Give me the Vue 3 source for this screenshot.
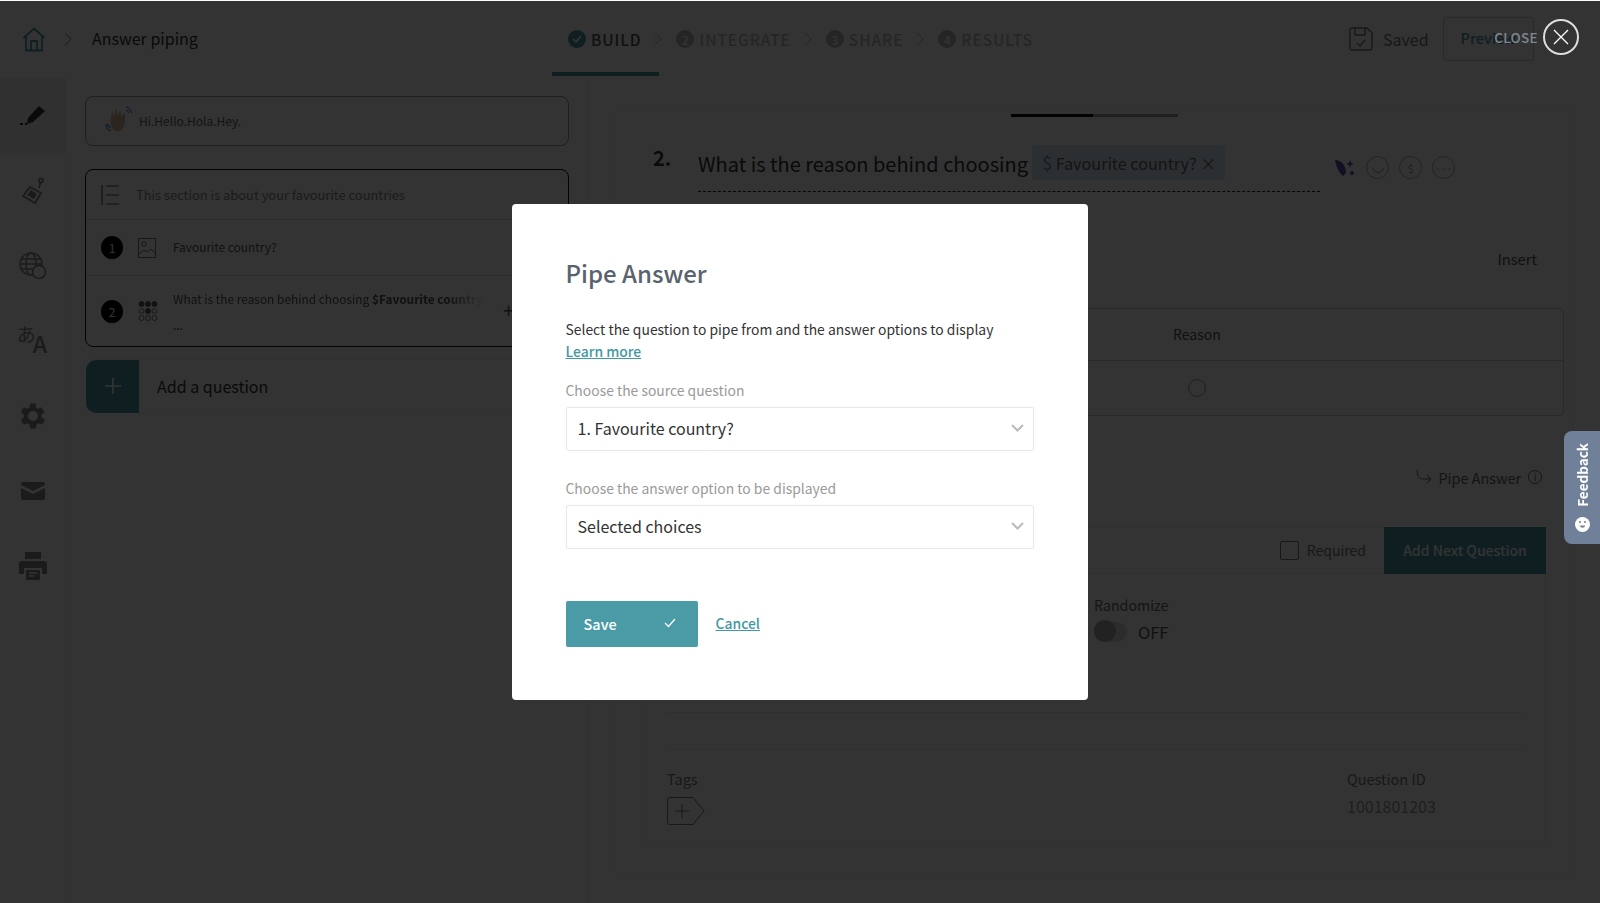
<template>
  <div class="page">
    <header class="topbar">
      <div class="crumbs">
        <svg class="home" width="24" height="25" viewBox="0 0 24 25" fill="none" stroke="#4a9ba5" stroke-width="1.8"><path d="M1.500 11 12 1.500 22.500 11M4 9v14.500h16V9M9 23.500V14h6v9.500" /></svg>
        <svg class="chev" width="8" height="14" viewBox="0 0 8 14" fill="none" stroke="#888" stroke-width="1"><path d="M1 1l6 6-6 6" /></svg>
        <span class="crumb-title">Answer piping</span>
      </div>
      <nav class="steps">
        <div class="tab-line"></div>
        <template v-for="(s, i) in steps" :key="s">
          <div class="step" :class="{ active: i === 0 }">
            <span class="step-dot">
              <svg v-if="i === 0" width="10" height="8" viewBox="0 0 10 8" fill="none" stroke="#fff" stroke-width="1.600"><path d="M1 4l3 3 5-6" /></svg>
              <template v-else>{{ i + 1 }}</template>
            </span>
            <span>{{ s }}</span>
          </div>
          <svg v-if="i < 3" class="step-chev" width="8" height="14" viewBox="0 0 8 14" fill="none" stroke="#bbb" stroke-width="1"><path d="M1 1l6 6-6 6" /></svg>
        </template>
      </nav>
      <div class="top-actions">
        <svg width="24" height="24" viewBox="0 0 24 24" fill="none" stroke="#777" stroke-width="1.400"><path d="M1 3a2 2 0 0 1 2-2h15l5 5v15a2 2 0 0 1-2 2H3a2 2 0 0 1-2-2zM6 1v7h10V1M8 16l3 3 5-6" /></svg>
        <span class="saved">Saved</span>
        <div class="preview-btn">Preview</div>
      </div>
    </header>

    <div class="main">
      <aside class="sidebar">
        <div class="side-item on">
          <svg width="26" height="20" viewBox="0 0 26 20" fill="#333"><path d="M19 0l6 5-12 11-6 2 1-6zM0 17h3v2H0zM5 17h2v2H5z" /></svg>
        </div>
        <div class="side-item">
          <svg width="24" height="28" viewBox="0 0 24 28" fill="none" stroke="#888" stroke-width="1.800"><circle cx="20" cy="3.500" r="2" /><path d="M19.500 5.500 18 11" /><path d="M9 10l11 6-6 10-12-7z" /><path d="M6 18l4-5 6 4-3 5z" fill="#888" stroke="none" /></svg>
        </div>
        <div class="side-item">
          <svg width="28" height="28" viewBox="0 0 28 28" fill="none" stroke="#888" stroke-width="1.500"><circle cx="12" cy="12" r="11" /><ellipse cx="12" cy="12" rx="5" ry="11" /><path d="M1 12h22M2.500 7h19M2.500 17h19" /><circle cx="20" cy="20" r="6.500" fill="#fff" stroke="#888" /></svg>
        </div>
        <div class="side-item lang"><span class="lang-a">あ</span><span class="lang-b">A</span></div>
        <div class="side-item">
          <svg width="34" height="34" viewBox="0 0 24 24" fill="#888"><path d="M19.400 13a7.600 7.600 0 0 0 0-2l2.100-1.600-2-3.500-2.500 1a7.500 7.500 0 0 0-1.700-1L15.400 3.200h-4l-.4 2.700a7.500 7.500 0 0 0-1.700 1l-2.500-1-2 3.500L6.900 11a7.600 7.600 0 0 0 0 2l-2.100 1.600 2 3.500 2.500-1a7.500 7.500 0 0 0 1.700 1l.4 2.700h4l.4-2.700a7.500 7.500 0 0 0 1.700-1l2.500 1 2-3.500zM13.400 15.500a3.500 3.500 0 1 1 0-7 3.500 3.500 0 0 1 0 7z" transform="translate(-1.400 0)" /></svg>
        </div>
        <div class="side-item">
          <svg width="24" height="18" viewBox="0 0 24 18" fill="#888"><path d="M2 0h20a2 2 0 0 1 2 2v1L12 9 0 3V2a2 2 0 0 1 2-2zM0 6l12 6 12-6v10a2 2 0 0 1-2 2H2a2 2 0 0 1-2-2z" /></svg>
        </div>
        <div class="side-item">
          <svg width="28" height="28" viewBox="0 0 28 28" fill="#888"><path d="M6 0h16v7H6zM3 9h22a3 3 0 0 1 3 3v10h-5v-6H5v6H0V12a3 3 0 0 1 3-3zM7 18h14v10H7z" /><path d="M10 21h8M10 24h5" stroke="#fff" stroke-width="1.400" /></svg>
        </div>
      </aside>

      <section class="builder">
        <div class="hello-card">
          <svg class="wave" width="28" height="28" viewBox="0 0 28 28" fill="none">
            <path d="M9 24c-3-3-4-8-3-12l1-7 2.500 6 1-9 2.500 8 2-7 1.500 8 3-5c1 5 1 11-1 15-2 4-7 6-9.500 3z" fill="#d9b69c" />
            <path d="M21 1c3 1 5 3 6 6M21 4c1.500.5 2.500 1.500 3 3M1 18c0 3 2 6 5 7M3 18c0 1.500 1 3 2.500 3.500" stroke="#4a90d9" stroke-width="1.300" />
          </svg>
          <span>Hi.Hello.Hola.Hey.</span>
        </div>
        <div class="section-card">
          <div class="section-head">
            <svg width="18" height="20" viewBox="0 0 18 20" fill="none" stroke="#555" stroke-width="1.200"><path d="M1 0v20M5 1h13M5 10h13M5 19h13" /></svg>
            <span>This section is about your favourite countries</span>
          </div>
          <div class="q-item first">
            <span class="num">1</span>
            <svg width="18" height="20" viewBox="0 0 18 20" fill="none" stroke="#777" stroke-width="1"><rect x=".5" y=".5" width="17" height="19" /><circle cx="6" cy="6" r="2.200" /><path d="M1 16l5-4 3 2 4-3 4 4" /></svg>
            <span class="q-text">Favourite country?</span>
          </div>
          <div class="q-item second">
            <span class="num">2</span>
            <svg width="20" height="20" viewBox="0 0 20 20" fill="#555" stroke="#555" stroke-width=".8">
              <circle cx="3.500" cy="3" r="2.500" /><circle cx="10" cy="3" r="2.500" /><circle cx="16.500" cy="3" r="2.500" />
              <circle cx="3.500" cy="10" r="2.500" fill="none" /><circle cx="10" cy="10" r="2.500" /><circle cx="16.500" cy="10" r="2.500" fill="none" />
              <circle cx="3.500" cy="17" r="2.500" fill="none" /><circle cx="10" cy="17" r="2.500" fill="none" /><circle cx="16.500" cy="17" r="2.500" fill="none" />
            </svg>
            <div class="q-text wrap">
              <div class="q-line">What is the reason behind choosing <b>$Favourite country</b></div>
              <div class="dots">...</div>
            </div>
            <span class="plus-small">+</span>
          </div>
        </div>
        <div class="add-question">
          <div class="add-plus">
            <svg width="16" height="16" viewBox="0 0 16 16" stroke="#fff" stroke-width="1.600"><path d="M8 0v16M0 8h16" /></svg>
          </div>
          <span>Add a question</span>
        </div>
      </section>

      <section class="canvas">
        <div class="canvas-card">
          <div class="progress"><div class="progress-fill"></div></div>
          <div class="q-row">
            <span class="q-no">2.</span>
            <div class="q-field">
              <span>What is the reason behind choosing</span>
              <span class="chip"><i>$</i> Favourite country? <em>×</em></span>
            </div>
            <div class="q-tools">
              <svg width="22" height="20" viewBox="0 0 22 20" fill="#5c4fa8"><path d="M1 2c6 0 11 5 11 13l-3 3C5 15 2 8 1 2zM16 2l1 3 3 1-3 1-1 3-1-3-3-1 3-1zM18 12l1 2 2 1-2 1-1 2-1-2-2-1 2-1z" /></svg>
              <span class="tool-circle"><svg width="14" height="14" viewBox="0 0 14 14" fill="none" stroke="#999"><path d="M2 7c1 6 9 6 10 0" /></svg></span>
              <span class="tool-circle txt">$</span>
              <span class="tool-circle txt">···</span>
            </div>
          </div>
          <div class="insert-row">Insert</div>
          <div class="choice-table">
            <div class="t-head">Reason</div>
            <div class="t-body"><span class="radio"></span></div>
          </div>
          <div class="pipe-row">
            <svg width="16" height="14" viewBox="0 0 16 14" fill="none" stroke="#666"><path d="M1 0c0 6 2 9 6 9h8M11 5l4 4-4 4" /></svg>
            <span>Pipe Answer</span>
            <span class="info">i</span>
          </div>
          <div class="settings">
            <div class="settings-head">
              <span class="check"></span>
              <span class="req">Required</span>
              <span class="next-btn">Add Next Question</span>
            </div>
            <div class="random">
              <div class="random-label">Randomize</div>
              <div class="random-row">
                <span class="toggle"><span class="knob"></span></span>
                <span class="off">OFF</span>
              </div>
            </div>
            <div class="rule first-rule"></div>
            <div class="rule second-rule"></div>
            <div class="settings-foot">
              <div>
                <div class="foot-label">Tags</div>
                <svg class="tag-add" width="38" height="28" viewBox="0 0 38 28" fill="none" stroke="#777"><path d="M3 .5h23l11 13.500-11 13.500H3a2.500 2.500 0 0 1-2.500-2.500V3A2.500 2.500 0 0 1 3 .5zM15 7v14M8 14h14" /></svg>
              </div>
              <div class="qid">
                <div class="foot-label">Question ID</div>
                <div class="qid-no">1001801203</div>
              </div>
            </div>
          </div>
        </div>
      </section>
    </div>

    <div class="overlay">
      <div class="modal">
        <h2 class="modal-title">Pipe Answer</h2>
        <p class="modal-desc">Select the question to pipe from and the answer options to display</p>
        <a class="learn">Learn more</a>
        <label class="field-label first-label">Choose the source question</label>
        <div class="select">
          <span>1. Favourite country?</span>
          <svg width="13" height="8" viewBox="0 0 13 8" fill="none" stroke="#bbb" stroke-width="2"><path d="M1 1l5.500 5.500L12 1" /></svg>
        </div>
        <label class="field-label second-label">Choose the answer option to be displayed</label>
        <div class="select">
          <span>Selected choices</span>
          <svg width="13" height="8" viewBox="0 0 13 8" fill="none" stroke="#bbb" stroke-width="2"><path d="M1 1l5.500 5.500L12 1" /></svg>
        </div>
        <div class="modal-actions">
          <button class="save-btn">
            <span>Save</span>
            <svg width="12" height="10" viewBox="0 0 12 10" fill="none" stroke="#fff" stroke-width="1.300"><path d="M1 5l3.500 3.500L11 1" /></svg>
          </button>
          <a class="cancel">Cancel</a>
        </div>
      </div>
    </div>

    <div class="close-wrap">
      <span class="close-label">CLOSE</span>
      <span class="close-btn">
        <svg width="16" height="16" viewBox="0 0 16 16" stroke="#fff" stroke-width="1.300"><path d="M1 1l14 14M15 1L1 15" /></svg>
      </span>
    </div>

    <div class="feedback">
      <span class="feedback-text">Feedback</span>
      <svg width="15" height="15" viewBox="0 0 15 15"><circle cx="7.500" cy="7.500" r="7.500" fill="#fff" /><path d="M5 8.500h5c0 3-5 3-5 0z" fill="#6f8098" /><circle cx="5" cy="5" r="1" fill="#6f8098" /><circle cx="10" cy="5" r="1" fill="#6f8098" /></svg>
    </div>
  </div>
</template>

<script setup>
const steps = ['BUILD', 'INTEGRATE', 'SHARE', 'RESULTS']
</script>

<style>
html, body {
  margin: 0;
  background: #fff;
  overflow: hidden;
}
</style>

<style scoped>
.page {
  position: relative;
  width: 1600px;
  height: 903px;
  overflow: hidden;
  background: #fff;
  color: #333;
  font-family: "Noto Sans CJK JP", "Noto Sans", sans-serif;
}

/* top bar */
.topbar {
  position: relative;
  height: 78px;
  box-sizing: border-box;
  display: flex;
  align-items: center;
  background: #fff;
}
.crumbs {
  display: flex;
  align-items: center;
  padding-left: 22px;
  width: 530px;
  box-sizing: border-box;
}
.chev {
  margin-left: 18px;
}
.crumb-title {
  margin-left: 20px;
  margin-top: -2px;
  font-size: 16px;
  color: #333;
}
.steps {
  position: relative;
  display: flex;
  align-items: center;
  height: 78px;
  padding-left: 38px;
  font-size: 15.500px;
  letter-spacing: 0.9px;
  font-weight: 500;
  color: #bbb;
}
.tab-line {
  position: absolute;
  left: 22px;
  top: 72px;
  width: 107px;
  height: 4px;
  background: #4a9ba5;
}
.step {
  display: flex;
  align-items: center;
  gap: 5px;
}
.step.active {
  color: #555;
}
.step-dot {
  width: 18px;
  height: 18px;
  border-radius: 50%;
  background: #bbb;
  color: #fff;
  font-size: 12px;
  letter-spacing: 0;
  display: flex;
  align-items: center;
  justify-content: center;
}
.active .step-dot {
  background: #4a9ba5;
}
.step-chev {
  margin: 0 14px 0 13px;
}
.top-actions {
  position: absolute;
  left: 1349px;
  top: 17px;
  display: flex;
  align-items: center;
  height: 44px;
}
.saved {
  margin-left: 10px;
  font-size: 16px;
  color: #777;
}
.preview-btn {
  margin-left: 14px;
  width: 91px;
  height: 44px;
  box-sizing: border-box;
  border: 1px solid #ccc;
  border-radius: 3px;
  padding-left: 17px;
  line-height: 40px;
  font-size: 14.500px;
  font-weight: 500;
  color: #4a9ba5;
}

/* body of the page */
.main {
  display: flex;
  height: 825px;
}
.sidebar {
  width: 67px;
  flex: none;
  border-right: 1px solid #f2f2f2;
  box-sizing: border-box;
  display: flex;
  flex-direction: column;
}
.side-item {
  height: 75px;
  flex: none;
  display: flex;
  align-items: center;
  justify-content: center;
}
.side-item.on {
  background: #eee;
}
.lang {
  position: relative;
  color: #888;
}
.lang-a {
  font-size: 19px;
  margin: -14px 0 0 -2px;
}
.lang-b {
  font-size: 23px;
  font-weight: 500;
  margin: 5px 0 0 -3px;
}
.builder {
  width: 521px;
  flex: none;
  box-sizing: border-box;
  padding: 18px 18px 0 18px;
  border-right: 1px solid #f0f0f0;
}
.hello-card {
  height: 50px;
  box-sizing: border-box;
  border: 1px solid #999;
  border-radius: 8px;
  display: flex;
  align-items: center;
  padding: 0 0 2px 19px;
  font-size: 12px;
  color: #666;
}
.wave {
  margin-right: 6px;
}
.section-card {
  margin-top: 23px;
  height: 178px;
  box-sizing: border-box;
  border: 1px solid #111;
  border-radius: 8px;
}
.section-head {
  height: 49px;
  box-sizing: border-box;
  display: flex;
  align-items: center;
  gap: 17px;
  padding-left: 15px;
  font-size: 12.900px;
  color: #888;
}
.q-item {
  position: relative;
  display: flex;
  align-items: center;
  border-top: 1px solid #ddd;
  padding-left: 15px;
  font-size: 11.900px;
  color: #555;
}
.q-item.first {
  height: 56px;
  box-sizing: border-box;
}
.q-item.second {
  height: 71px;
  box-sizing: border-box;
}
.num {
  width: 22px;
  height: 23px;
  border-radius: 50%;
  background: #000;
  color: #fff;
  font-size: 12px;
  display: flex;
  align-items: center;
  justify-content: center;
  margin-right: 15px;
  flex: none;
}
.q-text {
  margin-left: 17px;
  margin-top: -2px;
}
.q-text.wrap {
  margin-left: 15px;
  margin-top: 2px;
  width: 312px;
}
.q-line {
  white-space: nowrap;
  line-height: 18px;
  -webkit-mask-image: linear-gradient(90deg, #000 88%, transparent 100%);
  mask-image: linear-gradient(90deg, #000 88%, transparent 100%);
}
.dots {
  line-height: 18px;
  margin-top: 8px;
  color: #333;
}
.plus-small {
  position: absolute;
  left: 417px;
  top: 21px;
  font-size: 20px;
  color: #555;
  line-height: 26px;
}
.add-question {
  margin-top: 12px;
  height: 52px;
  margin-left: 1px;
  border: 1px solid #eee;
  border-left: none;
  border-radius: 10px 0 0 10px;
  display: flex;
  align-items: center;
  font-size: 16px;
  color: #333;
}
.add-plus {
  width: 53px;
  height: 53px;
  background: #4a9ba5;
  border-radius: 10px 0 0 10px;
  display: flex;
  align-items: center;
  justify-content: center;
  margin-right: 18px;
}

/* question canvas */
.canvas {
  flex: 1;
  box-sizing: border-box;
  padding: 27px 27px 0 27px;
}
.canvas-card {
  height: 772px;
  box-sizing: border-box;
  border: 1px solid #f4f4f4;
  border-radius: 8px;
  position: relative;
}
.progress {
  width: 167px;
  height: 3px;
  margin: 8px auto 0;
  background: #999;
}
.progress-fill {
  width: 82px;
  height: 3px;
  background: #000;
}
.q-row {
  margin-top: 28px;
  display: flex;
  align-items: flex-start;
  height: 47px;
  padding-left: 37px;
}
.q-no {
  width: 45px;
  font-size: 20px;
  font-weight: 700;
  color: #333;
  line-height: 26px;
}
.q-field {
  width: 622px;
  height: 47px;
  box-sizing: border-box;
  border-bottom: 1px dashed #222;
  display: flex;
  gap: 4px;
  font-size: 20px;
  color: #333;
  line-height: 34px;
  padding-top: 2px;
}
.chip {
  margin-top: -2px;
  height: 35px;
  background: #d8ebf2;
  border-radius: 3px;
  padding: 0 9px 0 10px;
  font-size: 16.200px;
  color: #666;
}
.chip i {
  font-style: normal;
  font-size: 18px;
  color: #5b8fb5;
}
.chip em {
  font-style: normal;
}
.q-tools {
  display: flex;
  align-items: center;
  gap: 10px;
  margin: 11px 0 0 14px;
}
.tool-circle {
  width: 21px;
  height: 21px;
  border: 1px solid #aaa;
  border-radius: 50%;
  display: flex;
  align-items: center;
  justify-content: center;
  font-size: 11px;
  color: #999;
}
.insert-row {
  margin-top: 57px;
  height: 20px;
  line-height: 20px;
  text-align: right;
  padding-right: 35px;
  font-size: 14.700px;
  color: #555;
}
.choice-table {
  margin: 39px 8px 0 26px;
  height: 108px;
  box-sizing: border-box;
  border: 1px solid #ccc;
  border-radius: 4px;
}
.t-head {
  height: 52px;
  line-height: 50px;
  border-bottom: 1px solid #ccc;
  box-sizing: border-box;
  padding-left: 530px;
  font-size: 14px;
  color: #555;
}
.t-body {
  padding: 18px 0 0 545px;
}
.radio {
  display: block;
  width: 16px;
  height: 16px;
  border: 1px solid #999;
  border-radius: 50%;
}
.pipe-row {
  margin-top: 51px;
  height: 20px;
  display: flex;
  justify-content: flex-end;
  align-items: center;
  gap: 7px;
  padding-right: 30px;
  font-size: 14.400px;
  color: #666;
}
.info {
  width: 14px;
  height: 14px;
  box-sizing: border-box;
  border: 1px solid #666;
  border-radius: 50%;
  font-size: 10px;
  line-height: 12px;
  text-align: center;
}
.settings {
  margin: 40px 26px 0 26px;
  height: 318px;
  border: 1px solid #f0f0f0;
  box-sizing: border-box;
  border-radius: 3px;
}
.settings-head {
  height: 47px;
  display: flex;
  align-items: center;
  justify-content: flex-end;
  margin-top: -1px;
  margin-right: -1px;
  font-size: 14px;
  border-bottom: 1px solid #eee;
  box-sizing: border-box;
}
.check {
  width: 19px;
  height: 19px;
  box-sizing: border-box;
  border: 1px solid #777;
  border-radius: 2px;
}
.req {
  margin: 0 18px 0 8px;
  color: #777;
}
.next-btn {
  width: 162px;
  height: 47px;
  line-height: 47px;
  text-align: center;
  background: #4a9ba5;
  color: #fff;
  font-weight: 500;
}
.random {
  margin: 21px 0 0 451px;
}
.random-label {
  height: 20px;
  line-height: 20px;
  font-size: 14.200px;
  color: #666;
}
.random-row {
  margin-top: 5px;
  height: 24px;
  display: flex;
  align-items: center;
}
.toggle {
  width: 33px;
  height: 20px;
  background: #ddd;
  border-radius: 10px;
  position: relative;
}
.knob {
  position: absolute;
  left: 0;
  top: -2px;
  width: 22px;
  height: 22px;
  border-radius: 50%;
  background: #aaa;
}
.off {
  margin-left: 11px;
  font-size: 16.500px;
  color: #555;
}
.rule {
  margin: 0 24px;
  height: 1px;
  background: #ececec;
}
.first-rule {
  margin-top: 68px;
}
.second-rule {
  margin-top: 36px;
}
.settings-foot {
  margin: 19px 0 0 24px;
  display: flex;
  justify-content: space-between;
  padding-right: 138px;
}
.foot-label {
  height: 20px;
  line-height: 20px;
  font-size: 14.500px;
  color: #777;
}
.tag-add {
  display: block;
  margin-top: 8px;
}
.qid {
  width: 60px;
  white-space: nowrap;
}
.qid-no {
  margin-top: 7px;
  font-size: 16px;
  line-height: 20px;
  color: #999;
}

/* dimmed layer and dialog */
.overlay {
  position: absolute;
  inset: 1px 0 0 0;
  background: rgba(0, 0, 0, 0.8);
  display: flex;
  align-items: center;
  justify-content: center;
}
.modal {
  width: 576px;
  height: 496px;
  box-sizing: border-box;
  padding: 54px 54px 0 53.500px;
  background: #fff;
  border-radius: 4px;
}
.modal-title {
  margin: 0;
  font-size: 24px;
  line-height: 30px;
  font-weight: 500;
  color: #59636d;
}
.modal-desc {
  margin: 30px 0 0;
  font-size: 13.900px;
  line-height: 22px;
  color: #333;
}
.learn,
.cancel {
  color: #3f98a3;
  text-decoration: underline;
  font-size: 13.900px;
  font-weight: 500;
}
.learn {
  display: block;
  line-height: 22px;
}
.cancel {
  margin-top: -2px;
}
.field-label {
  display: block;
  font-size: 13.900px;
  line-height: 20px;
  color: #9a9a9a;
}
.first-label {
  margin-top: 18px;
}
.second-label {
  margin-top: 27px;
}
.select {
  margin-top: 7px;
  height: 44px;
  box-sizing: border-box;
  border: 1px solid #e8e8e8;
  border-radius: 2px;
  display: flex;
  align-items: center;
  justify-content: space-between;
  padding: 0 9px 2px 11px;
  font-size: 16px;
  color: #333;
}
.modal-actions {
  margin-top: 52px;
  display: flex;
  align-items: center;
  gap: 18px;
}
.save-btn {
  width: 132px;
  height: 46px;
  border: none;
  border-radius: 2px;
  background: #4a9ba5;
  color: #fff;
  font-family: inherit;
  font-size: 14.500px;
  font-weight: 500;
  display: flex;
  align-items: center;
  justify-content: space-between;
  padding: 0 22px 2px 18px;
}

/* floating controls above the dim layer */
.close-wrap {
  position: absolute;
  right: 21px;
  top: 19px;
  display: flex;
  align-items: center;
  gap: 5px;
}
.close-label {
  font-size: 13.500px;
  font-weight: 500;
  letter-spacing: 0.3px;
  color: #7c8791;
}
.close-btn {
  width: 36px;
  height: 36px;
  box-sizing: border-box;
  border: 2px solid #ddd;
  border-radius: 50%;
  display: flex;
  align-items: center;
  justify-content: center;
}
.feedback {
  position: absolute;
  right: 0;
  top: 431px;
  width: 36px;
  height: 113px;
  box-sizing: border-box;
  background: #6f8098;
  border-radius: 8px 0 0 8px;
  display: flex;
  flex-direction: column;
  align-items: center;
  padding-top: 12px;
  gap: 10px;
  color: #fff;
}
.feedback-text {
  writing-mode: vertical-rl;
  transform: rotate(180deg);
  font-size: 13.500px;
  font-weight: 700;
  line-height: 18px;
}
</style>
